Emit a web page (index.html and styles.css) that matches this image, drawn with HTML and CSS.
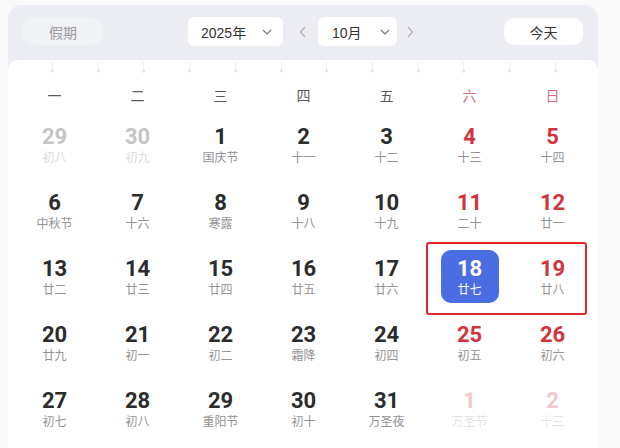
FILE: index.html
```html
<!DOCTYPE html>
<html lang="zh">
<head>
<meta charset="utf-8">
<link rel="stylesheet" href="styles.css">
</head>
<body>
<div class="panel">
  <div class="header">
    <div class="btn btn-holiday">假期</div>
    <div class="select select-year"><span>2025年</span>
      <svg class="caret" width="10" height="6" viewBox="0 0 10 6"><path d="M1 1 L5 5 L9 1" fill="none" stroke="#777" stroke-width="1.2"/></svg>
    </div>
    <svg class="arrow arrow-prev" width="16" height="12" viewBox="0 0 16 12"><path d="M10 1 L5.5 6 L10 11" fill="none" stroke="#b3b3b8" stroke-width="1.3"/></svg>
    <div class="select select-month"><span>10月</span>
      <svg class="caret" width="10" height="6" viewBox="0 0 10 6"><path d="M1 1 L5 5 L9 1" fill="none" stroke="#777" stroke-width="1.2"/></svg>
    </div>
    <svg class="arrow arrow-next" width="16" height="12" viewBox="0 0 16 12"><path d="M6 1 L10.5 6 L6 11" fill="none" stroke="#b3b3b8" stroke-width="1.3"/></svg>
    <div class="btn btn-today">今天</div>
  </div>
  <div class="card">
    <div class="ticks">
      <i></i><i></i><i></i><i></i><i></i><i></i><i></i><i></i><i></i><i></i><i></i><i></i>
    </div>
    <div class="weekdays">
      <span>一</span><span>二</span><span>三</span><span>四</span><span>五</span><span class="we">六</span><span class="we">日</span>
    </div>
    <div class="grid">
      <div class="day other"><b>29</b><small>初八</small></div>
      <div class="day other"><b>30</b><small>初九</small></div>
      <div class="day"><b>1</b><small>国庆节</small></div>
      <div class="day"><b>2</b><small>十一</small></div>
      <div class="day"><b>3</b><small>十二</small></div>
      <div class="day red"><b>4</b><small>十三</small></div>
      <div class="day red"><b>5</b><small>十四</small></div>

      <div class="day"><b>6</b><small>中秋节</small></div>
      <div class="day"><b>7</b><small>十六</small></div>
      <div class="day"><b>8</b><small>寒露</small></div>
      <div class="day"><b>9</b><small>十八</small></div>
      <div class="day"><b>10</b><small>十九</small></div>
      <div class="day red"><b>11</b><small>二十</small></div>
      <div class="day red"><b>12</b><small>廿一</small></div>

      <div class="day"><b>13</b><small>廿二</small></div>
      <div class="day"><b>14</b><small>廿三</small></div>
      <div class="day"><b>15</b><small>廿四</small></div>
      <div class="day"><b>16</b><small>廿五</small></div>
      <div class="day"><b>17</b><small>廿六</small></div>
      <div class="day selected"><b>18</b><small>廿七</small></div>
      <div class="day red"><b>19</b><small>廿八</small></div>

      <div class="day"><b>20</b><small>廿九</small></div>
      <div class="day"><b>21</b><small>初一</small></div>
      <div class="day"><b>22</b><small>初二</small></div>
      <div class="day"><b>23</b><small>霜降</small></div>
      <div class="day"><b>24</b><small>初四</small></div>
      <div class="day red"><b>25</b><small>初五</small></div>
      <div class="day red"><b>26</b><small>初六</small></div>

      <div class="day"><b>27</b><small>初七</small></div>
      <div class="day"><b>28</b><small>初八</small></div>
      <div class="day"><b>29</b><small>重阳节</small></div>
      <div class="day"><b>30</b><small>初十</small></div>
      <div class="day"><b>31</b><small>万圣夜</small></div>
      <div class="day other-red"><b>1</b><small>万圣节</small></div>
      <div class="day other-red"><b>2</b><small>十三</small></div>
    </div>
    <div class="mark"></div>
  </div>
</div>
</body>
</html>
```

FILE: styles.css
```css
* { box-sizing: border-box; }
html, body { margin: 0; padding: 0; }
body {
  width: 620px;
  height: 448px;
  overflow: hidden;
  background: #f9f9fa;
  font-family: "Noto Sans CJK SC", "Noto Sans", sans-serif;
}
.panel {
  margin: 5px 0 0 8px;
  width: 590px;
  height: 443px;
  background: #ecedf2;
  border-radius: 14px 14px 0 0;
  padding-top: 12px;
  display: flex;
  flex-direction: column;
}
.header {
  display: flex;
  align-items: center;
  height: 29px;
  padding: 0 15px;
}
.btn {
  width: 80px;
  height: 27px;
  border-radius: 10px;
  display: flex;
  align-items: center;
  justify-content: center;
  font-size: 14px;
}
.btn-holiday {
  background: #f1f2f6;
  color: #9a9a9f;
}
.btn-today {
  margin-left: auto;
  width: 79px;
  background: #fff;
  color: #333;
}
.select {
  height: 29px;
  background: #fff;
  border-radius: 6px;
  display: flex;
  align-items: center;
  font-size: 14px;
  color: #333;
}
.select span { font-family: "Liberation Sans", "Noto Sans CJK SC", sans-serif; }
.select-year {
  margin-left: 85px;
  width: 95px;
  padding-left: 13px;
}
.select-year .caret { margin-left: 16px; }
.select-month {
  margin-left: 7px;
  width: 79px;
  padding-left: 14px;
}
.select-month .caret { margin-left: 18px; }
.arrow-prev { margin-left: 12px; }
.arrow-next { margin-left: 5px; }
.card {
  position: relative;
  margin-top: 14px;
  flex: 1;
  background: #fff;
  border-radius: 10px 10px 0 0;
  padding: 25px 4px 0 5px;
}
.ticks {
  position: absolute;
  top: 2px;
  left: 43px;
  width: 506px;
  display: flex;
  justify-content: space-between;
}
.ticks i {
  display: block;
  width: 3px;
  height: 11px;
  background:
    radial-gradient(circle at 1.5px 9px, #e6e7eb 1.5px, transparent 1.8px),
    linear-gradient(#eeeff2, #eeeff2) center top / 1px 8px no-repeat;
}
.weekdays {
  display: grid;
  grid-template-columns: repeat(7, 83px);
  height: 20px;
  margin-bottom: 13px;
  align-items: center;
  text-align: center;
  font-size: 14px;
  color: #5a5a5c;
}
.weekdays .we { color: #d7707a; }
.grid {
  display: grid;
  grid-template-columns: repeat(7, 83px);
  grid-auto-rows: 53px;
  row-gap: 13px;
}
.day {
  justify-self: center;
  width: 58px;
  height: 53px;
  border-radius: 10px;
  padding-top: 7px;
  display: flex;
  flex-direction: column;
  align-items: center;
}
.day b {
  font-family: Roboto, "Liberation Sans", sans-serif;
  font-weight: 700;
  font-size: 22px;
  line-height: 24px;
  color: #2c2c2e;
}
.day small {
  font-size: 12px;
  line-height: 16px;
  color: #939395;
}
.day.red b { color: #d2343d; }
.day.other b { color: #c5c5c7; }
.day.other small { color: #dadadc; }
.day.other-red b { color: #f1c9cb; }
.day.other-red small { color: #e5e1e1; }
.day.selected { background: #4a6de4; }
.day.selected b, .day.selected small { color: #fff; }
.mark {
  position: absolute;
  left: 418px;
  top: 182px;
  width: 161px;
  height: 73px;
  border: 2px solid #e0282b;
  border-radius: 3px;
}
```
